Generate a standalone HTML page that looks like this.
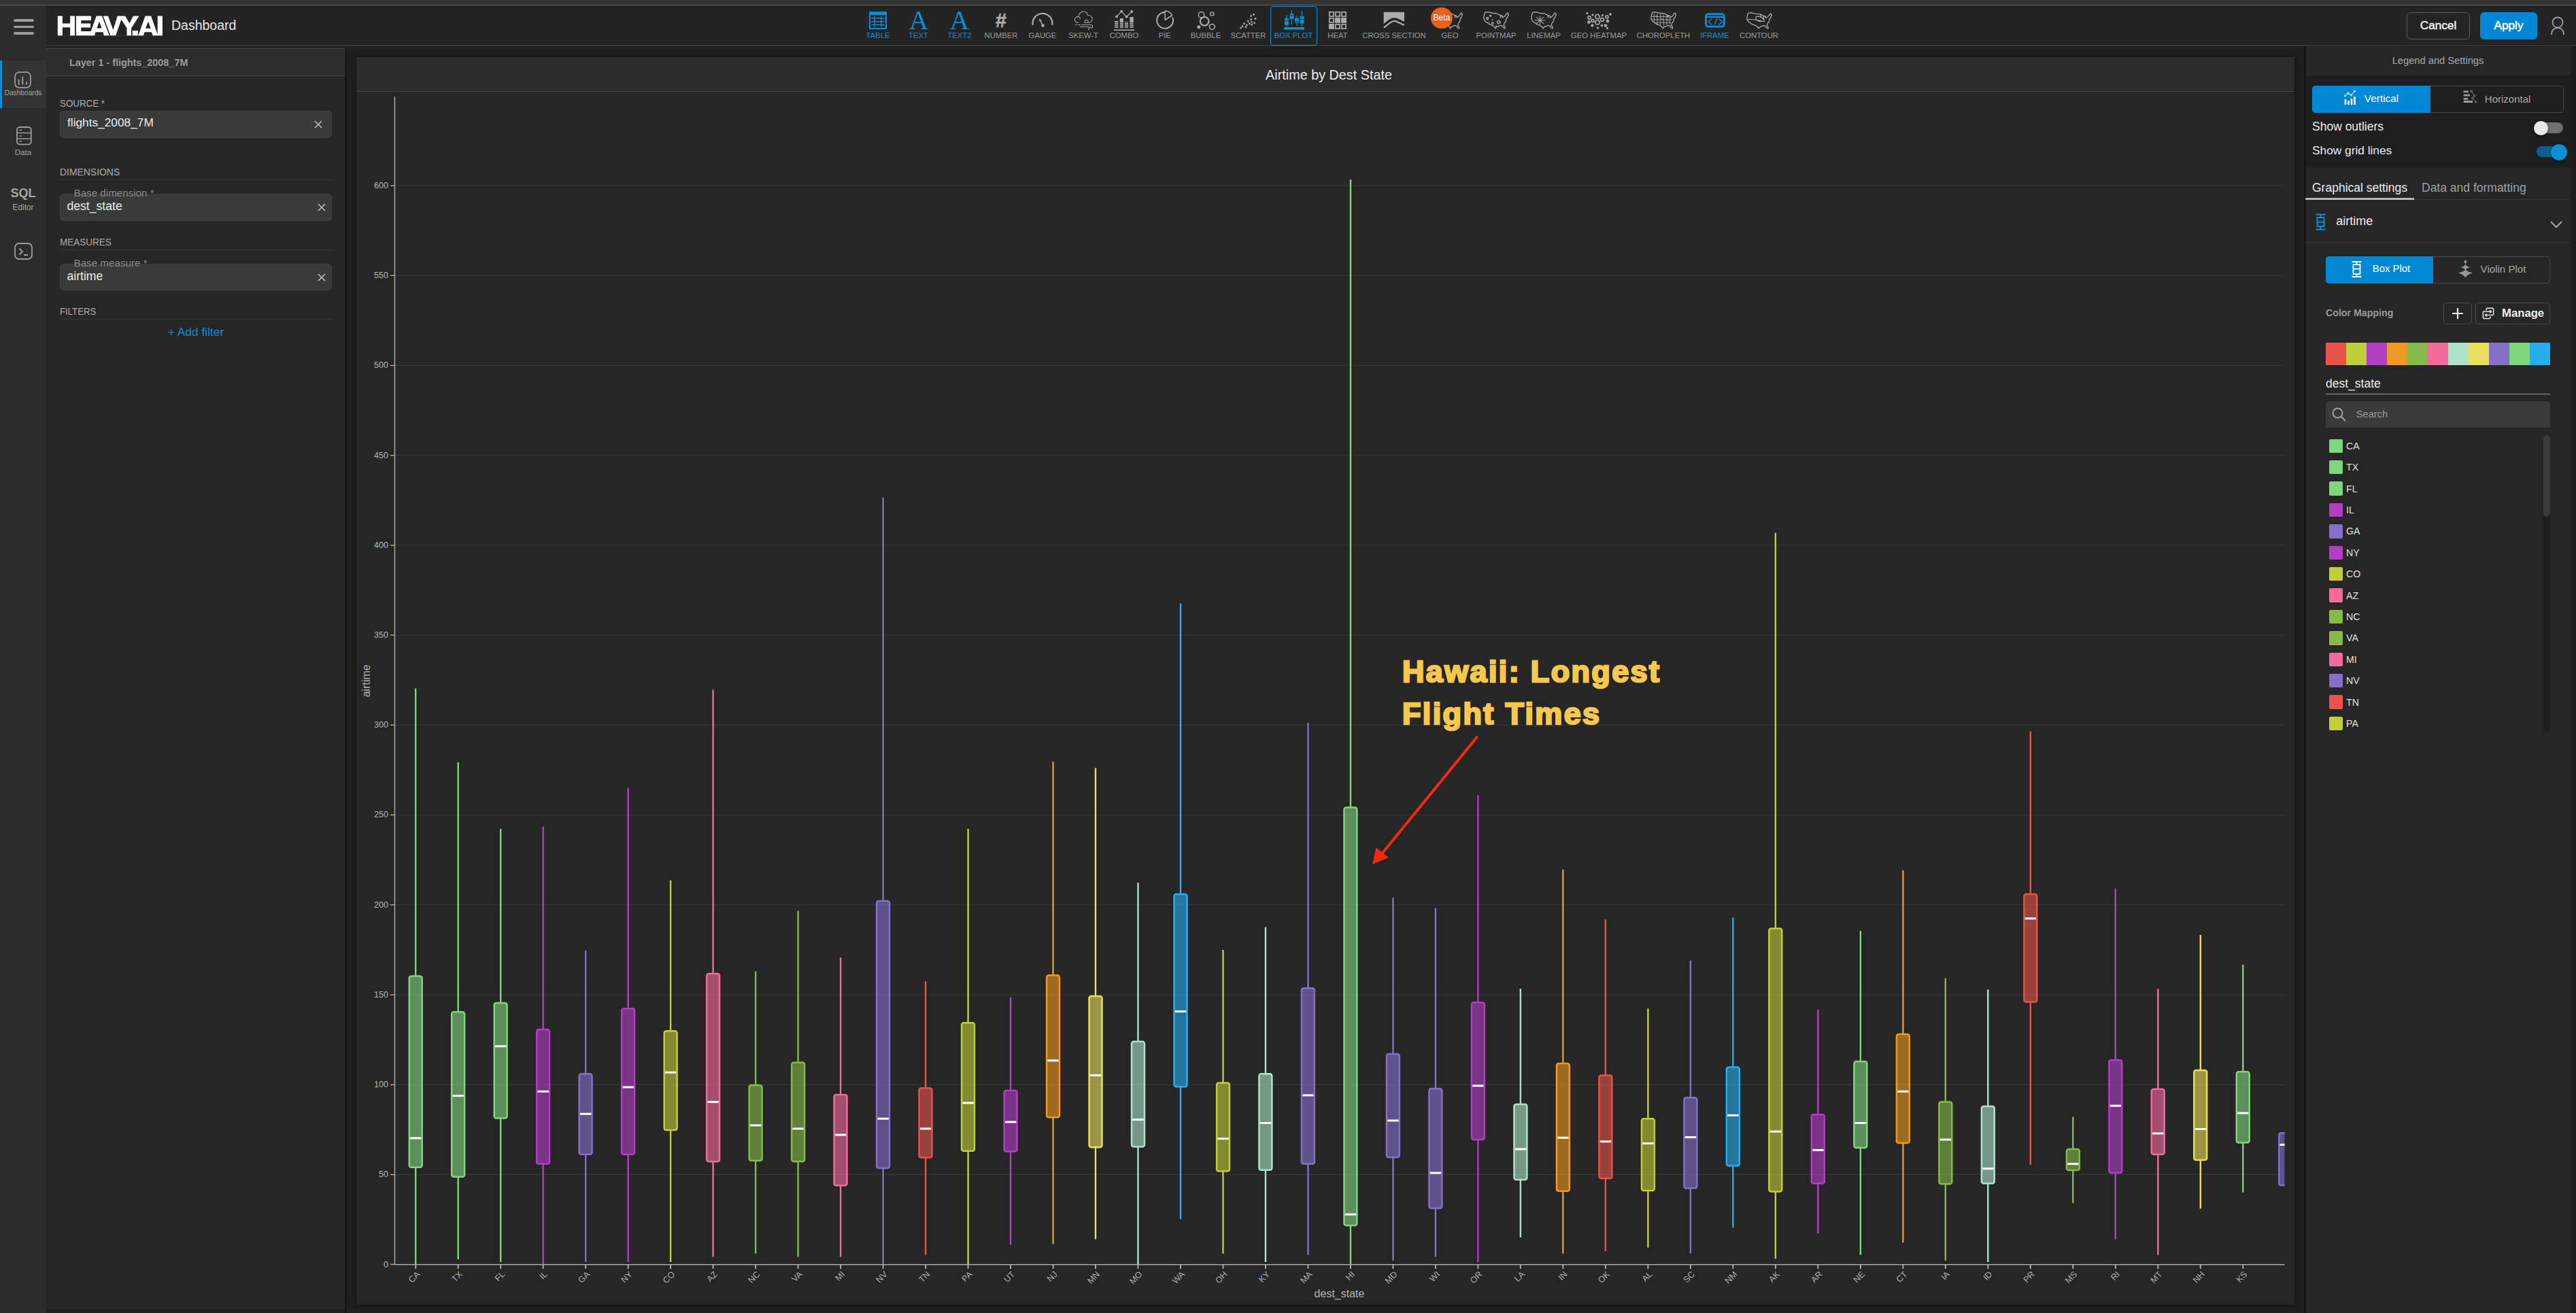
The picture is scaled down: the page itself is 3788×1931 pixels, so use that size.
<!DOCTYPE html>
<html><head><meta charset="utf-8">
<style>
*{box-sizing:border-box;margin:0;padding:0}
html,body{width:3788px;height:1931px;overflow:hidden;background:#1f1f1f;font-family:"Liberation Sans",sans-serif}
.a{position:absolute}
.t{position:absolute;white-space:nowrap;line-height:1}
</style></head><body>
<!-- top band -->
<div class="a" style="left:0;top:0;width:3788px;height:7px;background:#343434"></div>
<div class="a" style="left:0;top:7px;width:3788px;height:1px;background:#676767"></div>
<!-- header -->
<div class="a" style="left:68px;top:8px;width:3720px;height:59px;background:#242424"></div>
<div class="a" style="left:68px;top:67px;width:3720px;height:1px;background:#454545"></div>
<div class="a" style="left:68px;top:68px;width:3720px;height:1px;background:#161616"></div>
<!-- sidebar -->
<div class="a" style="left:0;top:8px;width:68px;height:1923px;background:#2c2c2c"></div>
<!-- hamburger -->
<div class="a" style="left:20px;top:28px;width:30px;height:3.5px;border-radius:2px;background:#9c9c9c"></div>
<div class="a" style="left:20px;top:37.7px;width:30px;height:3.5px;border-radius:2px;background:#9c9c9c"></div>
<div class="a" style="left:20px;top:47.3px;width:30px;height:3.5px;border-radius:2px;background:#9c9c9c"></div>
<!-- active item -->
<div class="a" style="left:0;top:89px;width:68px;height:70px;background:#333333"></div>
<div class="a" style="left:0;top:89px;width:3px;height:70px;background:#0a8fd6"></div>
<svg class="a" style="left:21px;top:104.5px" width="25" height="25" viewBox="0 0 26 26">
<rect x="1.2" y="1.2" width="23.6" height="23.6" rx="6" fill="none" stroke="#9c9c9c" stroke-width="1.8"/>
<path d="M7 19.5V13M12.8 19.5V8.5M18.8 19.5V16.5" stroke="#9c9c9c" stroke-width="2" stroke-linecap="round"/>
</svg>
<div class="t" style="left:0;width:68px;text-align:center;top:132px;font-size:10.2px;color:#a4a4a4">Dashboards</div>
<!-- data -->
<svg class="a" style="left:23.5px;top:186px" width="23" height="28" viewBox="0 0 23 28">
<rect x="1" y="1" width="20.8" height="25.3" rx="4" fill="none" stroke="#9c9c9c" stroke-width="1.8"/>
<path d="M1 9.5H21.8M1 18H21.8M4.5 5.5H8M4.5 14H8M4.5 22H8" stroke="#9c9c9c" stroke-width="1.6"/>
</svg>
<div class="t" style="left:0;width:68px;text-align:center;top:218px;font-size:11.6px;color:#a4a4a4">Data</div>
<!-- SQL -->
<div class="t" style="left:0;width:68px;text-align:center;top:275px;font-size:18px;font-weight:bold;color:#a4a4a4">SQL</div>
<div class="t" style="left:0;width:68px;text-align:center;top:300px;font-size:11.9px;color:#a4a4a4">Editor</div>
<!-- terminal -->
<svg class="a" style="left:20.5px;top:356.5px" width="27" height="25" viewBox="0 0 27 25">
<rect x="1" y="1" width="25" height="23" rx="6" fill="none" stroke="#9c9c9c" stroke-width="1.8"/>
<path d="M7.5 8.5L12 13L7.5 17.5M14 18H20" stroke="#9c9c9c" stroke-width="1.8" fill="none"/>
</svg>
<svg class="a" style="left:80px;top:20px" width="165" height="36" viewBox="80 20 165 36">
<rect x="84.8" y="23.5" width="154.1" height="28.8" fill="#fff"/>
<g fill="#242424">
<rect x="91.88" y="23" width="11.22" height="11.5"/><rect x="91.88" y="40.3" width="11.22" height="12.5"/><rect x="110.03" y="23" width="1.82" height="30"/>
<path d="M133.96 23L141.9 23L133.65 45.9L119.27 45.9L119.27 40.6L133.1 40.6L133.1 34.5L119.27 34.5L119.27 29.9L133.96 29.9Z"/>
<path d="M142.4 41.6L146 31.4L149.6 41.6Z"/><path d="M138.9 52.8L140.4 47.2L151.6 47.2L152.9 52.8Z"/>
<path d="M149.8 23L151.5 23L162.6 52.8L160.9 52.8Z"/>
<path d="M158.8 23L166.4 44L172.9 23Z"/><path d="M169.9 52.8L178.4 28.7L186.5 41.2L186.5 52.8Z"/>
<path d="M183.9 23L190.4 34.6L196.1 23Z"/>
<path d="M204.9 23L193.1 41.4L193.1 52.8L194.8 52.8L194.8 44.9L202.9 44.9L202.9 52.8L203.1 52.8L213.8 23Z"/>
<path d="M214.2 41.8L217.8 31.4L221.7 41.8Z"/><path d="M210.8 52.8L212.5 47.3L222.8 47.3L224.9 52.8Z"/>
<path d="M221.9 23L231.7 23L231.7 50.6Z"/>
</g></svg>
<div class="t" style="left:252px;top:28.49px;font-size:19.5px;color:#e4e4e4;">Dashboard</div>
<div class="t" style="left:791px;width:1000px;text-align:center;top:47.43px;font-size:11.3px;color:#0a8fd6;">TABLE</div>
<div class="t" style="left:850.5px;width:1000px;text-align:center;top:47.43px;font-size:11.3px;color:#0a8fd6;">TEXT</div>
<div class="t" style="left:911px;width:1000px;text-align:center;top:47.43px;font-size:11.3px;color:#0a8fd6;">TEXT2</div>
<div class="t" style="left:972px;width:1000px;text-align:center;top:47.43px;font-size:11.3px;color:#9a9a9a;">NUMBER</div>
<div class="t" style="left:1033px;width:1000px;text-align:center;top:47.43px;font-size:11.3px;color:#9a9a9a;">GAUGE</div>
<div class="t" style="left:1093px;width:1000px;text-align:center;top:47.43px;font-size:11.3px;color:#9a9a9a;">SKEW-T</div>
<div class="t" style="left:1153px;width:1000px;text-align:center;top:47.43px;font-size:11.3px;color:#9a9a9a;">COMBO</div>
<div class="t" style="left:1212.8px;width:1000px;text-align:center;top:47.43px;font-size:11.3px;color:#9a9a9a;">PIE</div>
<div class="t" style="left:1273px;width:1000px;text-align:center;top:47.43px;font-size:11.3px;color:#9a9a9a;">BUBBLE</div>
<div class="t" style="left:1335.6px;width:1000px;text-align:center;top:47.43px;font-size:11.3px;color:#9a9a9a;">SCATTER</div>
<div class="t" style="left:1402px;width:1000px;text-align:center;top:47.43px;font-size:11.3px;color:#0a8fd6;">BOX PLOT</div>
<div class="t" style="left:1467px;width:1000px;text-align:center;top:47.43px;font-size:11.3px;color:#9a9a9a;">HEAT</div>
<div class="t" style="left:1550px;width:1000px;text-align:center;top:47.43px;font-size:11.3px;color:#9a9a9a;">CROSS SECTION</div>
<div class="t" style="left:1632px;width:1000px;text-align:center;top:47.43px;font-size:11.3px;color:#9a9a9a;">GEO</div>
<div class="t" style="left:1700px;width:1000px;text-align:center;top:47.43px;font-size:11.3px;color:#9a9a9a;">POINTMAP</div>
<div class="t" style="left:1770px;width:1000px;text-align:center;top:47.43px;font-size:11.3px;color:#9a9a9a;">LINEMAP</div>
<div class="t" style="left:1851px;width:1000px;text-align:center;top:47.43px;font-size:11.3px;color:#9a9a9a;">GEO HEATMAP</div>
<div class="t" style="left:1946px;width:1000px;text-align:center;top:47.43px;font-size:11.3px;color:#9a9a9a;">CHOROPLETH</div>
<div class="t" style="left:2021.5px;width:1000px;text-align:center;top:47.43px;font-size:11.3px;color:#0a8fd6;">IFRAME</div>
<div class="t" style="left:2086.5px;width:1000px;text-align:center;top:47.43px;font-size:11.3px;color:#9a9a9a;">CONTOUR</div>
<div class="a" style="left:1868px;top:9px;width:69px;height:58px;border:1.5px solid #0a8fd6;border-radius:4px"></div>
<svg class="a" style="left:1278px;top:17px" width="26" height="26" viewBox="0 0 26 26">
<rect x="1" y="1" width="24" height="24" fill="none" stroke="#0a8fd6" stroke-width="2"/><rect x="1" y="1" width="24" height="4" fill="#0a8fd6"/>
<path d="M3 9.8H23M3 14.7H23M3 19.6H23M8 7V23M17.9 7V23" stroke="#0a8fd6" stroke-width="1.5"/></svg>
<div class="t" style="left:1331px;width:40px;text-align:center;top:10.5px;font-family:'Liberation Serif';font-size:39.5px;color:#0a8fd6">A</div>
<div class="t" style="left:1391px;width:40px;text-align:center;top:10.5px;font-family:'Liberation Serif';font-size:39.5px;color:#0a8fd6">A</div>
<div class="t" style="left:1452px;width:40px;text-align:center;top:15.5px;font-size:29px;font-weight:bold;color:#ababab;-webkit-text-stroke:0.5px #ababab">#</div>
<svg class="a" style="left:1516px;top:18px" width="34" height="24" viewBox="0 0 34 24">
<path d="M2.85 18.9A14.4 14.4 0 1 1 31.15 18.9" fill="none" stroke="#ababab" stroke-width="2.2"/>
<path d="M17.5 19.6L13.6 12.2" stroke="#ababab" stroke-width="1.4"/><path d="M12.2 8.9L16 12.4L12.4 13.6Z" fill="#ababab"/><circle cx="17.5" cy="19.6" r="2.3" fill="#ababab"/></svg>
<svg class="a" style="left:1579px;top:16px" width="29" height="29" viewBox="0 0 29 29">
<path d="M7 17.5C2.5 17.5 1 14.5 1.5 12C2 9.5 4.5 8 7 8.5C7.5 4 10.5 1 14 1C17.5 1 20 3.5 20.5 6.5C24 6 27.5 8.5 27 12.5C26.5 16 24 17.5 21.5 17.5" fill="none" stroke="#ababab" stroke-width="1.1"/>
<path d="M7.5 9C8.5 9.5 9.5 10.5 9.8 11.5M15 17.5H20C21.5 17.5 22 14 19.5 13.5C17 13 16 15 16.5 16" fill="none" stroke="#ababab" stroke-width="1.1"/>
<path d="M2 20.5H4M5.5 20.5H10M11.5 20.5H25.5C28 20.5 28.5 24.5 26 25C24.5 25.3 23.5 24 24 23M9 23.5H21C23 23.5 23 27.5 21 28" fill="none" stroke="#ababab" stroke-width="1.1"/></svg>
<svg class="a" style="left:1637px;top:14px" width="32" height="32" viewBox="0 0 32 32">
<path d="M5 10.3L12.2 2.6L19.6 10.7L27.2 3" fill="none" stroke="#ababab" stroke-width="1.3"/>
<circle cx="5" cy="10.3" r="1.9" fill="#ababab"/><circle cx="12.2" cy="2.6" r="1.9" fill="#ababab"/><circle cx="19.6" cy="10.7" r="1.9" fill="#ababab"/><circle cx="27.2" cy="3" r="1.9" fill="#ababab"/>
<path d="M2.1 17H7.3V26.7H2.1ZM9.8 13.1H15V26.7H9.8ZM17.1 18.2H22V26.7H17.1ZM24.4 11H29.7V26.7H24.4Z" fill="#ababab"/>
<path d="M2 19.5H30M2 22H30M2 24.5H30" stroke="#242424" stroke-width="0.8"/>
<path d="M1 30.2H31" stroke="#ababab" stroke-width="1.6"/></svg>
<svg class="a" style="left:1699px;top:14px" width="30" height="30" viewBox="0 0 30 30">
<path d="M25.2 11.5A11.9 11.9 0 1 1 14.2 4" fill="none" stroke="#ababab" stroke-width="2"/>
<path d="M14.2 2V15.5L24.7 8.5A12 12 0 0 0 14.2 2Z" fill="none" stroke="#ababab" stroke-width="1.6" stroke-linejoin="round"/></svg>
<svg class="a" style="left:1758px;top:14px" width="30" height="30" viewBox="0 0 30 30">
<circle cx="13.2" cy="17.3" r="6.3" fill="none" stroke="#ababab" stroke-width="2.2"/><circle cx="8.6" cy="7.9" r="4.3" fill="none" stroke="#ababab" stroke-width="1.5"/>
<circle cx="24.3" cy="6.5" r="2.6" fill="none" stroke="#ababab" stroke-width="1.4"/><circle cx="24.3" cy="25.4" r="3.9" fill="none" stroke="#ababab" stroke-width="1.6"/><circle cx="4.8" cy="25.7" r="2.5" fill="#ababab"/></svg>
<svg class="a" style="left:1820px;top:16px" width="30" height="30" viewBox="1820 16 30 30"><circle cx="1824.7" cy="41.1" r="1.45" fill="#ababab"/><circle cx="1827.1" cy="38.7" r="1.45" fill="#ababab"/><circle cx="1829.6" cy="34.8" r="1.45" fill="#ababab"/><circle cx="1832" cy="40" r="1.45" fill="#ababab"/><circle cx="1833.4" cy="36.9" r="1.45" fill="#ababab"/><circle cx="1835.2" cy="31" r="1.45" fill="#ababab"/><circle cx="1837.3" cy="34.8" r="1.45" fill="#ababab"/><circle cx="1839.7" cy="28.5" r="1.45" fill="#ababab"/><circle cx="1840.7" cy="32.4" r="1.45" fill="#ababab"/><circle cx="1840.7" cy="36.2" r="1.45" fill="#ababab"/><circle cx="1839.7" cy="23.6" r="1.45" fill="#ababab"/><circle cx="1843.5" cy="21.2" r="1.45" fill="#ababab"/><circle cx="1846" cy="27.5" r="1.45" fill="#ababab"/><circle cx="1844.6" cy="33.8" r="1.45" fill="#ababab"/></svg>
<svg class="a" style="left:1886px;top:13px" width="34" height="32" viewBox="1886 13 34 32">
<path d="M1892.1 21.9V38.7M1899.4 15.2V35.9M1907 23.3V38M1914.5 16.3V38.7" stroke="#0a8fd6" stroke-width="1.2"/>
<rect x="1889" y="26.8" width="5.9" height="10.1" fill="#0a8fd6"/><rect x="1896.7" y="20.1" width="5.9" height="7.7" fill="#0a8fd6"/>
<rect x="1904" y="26.8" width="5.9" height="7" fill="#0a8fd6"/><rect x="1911.7" y="24" width="5.9" height="10.5" fill="#0a8fd6"/>
<path d="M1889 30.6H1894.9M1896.7 22.9H1902.6M1904 32H1909.9M1911.7 28.5H1917.6" stroke="#242424" stroke-width="0.9"/>
<rect x="1888" y="40" width="30" height="3.5" fill="#0a8fd6"/></svg>
<svg class="a" style="left:1950px;top:14px" width="34" height="32" viewBox="1950 14 34 32"><rect x="1954.85" y="17.75" width="6.2" height="6.2" fill="none" stroke="#ababab" stroke-width="1.7"/><rect x="1963.90" y="17.75" width="6.2" height="6.2" fill="none" stroke="#ababab" stroke-width="1.7"/><rect x="1972.95" y="17.75" width="6.2" height="6.2" fill="none" stroke="#ababab" stroke-width="1.7"/><rect x="1954.85" y="26.80" width="6.2" height="6.2" fill="none" stroke="#ababab" stroke-width="1.7"/><rect x="1963.05" y="25.95" width="7.9" height="7.9" fill="#ababab"/><rect x="1972.10" y="25.95" width="7.9" height="7.9" fill="#ababab"/><rect x="1954.00" y="35.00" width="7.9" height="7.9" fill="#ababab"/><rect x="1963.90" y="35.85" width="6.2" height="6.2" fill="none" stroke="#ababab" stroke-width="1.7"/><rect x="1972.95" y="35.85" width="6.2" height="6.2" fill="none" stroke="#ababab" stroke-width="1.7"/></svg>
<svg class="a" style="left:2032px;top:16px" width="36" height="28" viewBox="2032 16 36 28">
<path d="M2034.7 17.8H2065V31.8C2060 30 2056 26 2050 26.2C2044 26.4 2039 32 2034.7 35Z" fill="#ababab"/>
<path d="M2035 40.6C2040 37.4 2045 30.9 2050 30.8C2055 30.7 2060 35.9 2065 36.8" fill="none" stroke="#ababab" stroke-width="2.3"/></svg>
<svg class="a" style="left:2116px;top:17px" width="35" height="26" viewBox="0 0 100 70" preserveAspectRatio="none"><defs><clipPath id="c2116"><path d="M8 3L19 2L34 6L54 8L62 13L67 15L67 24L69 15L74 17L75 24L84 18L91 8L94 5L99 13L95 18L94 24L89 28L89 36L83 45L80 51L81 57L85 62L84 67L78 64L75 57L67 55L59 58L51 61L48 67L41 58L32 53L25 51L18 46L8 39L2 27L4.4 11.5Z"/></clipPath></defs><path d="M8 3L19 2L34 6L54 8L62 13L67 15L67 24L69 15L74 17L75 24L84 18L91 8L94 5L99 13L95 18L94 24L89 28L89 36L83 45L80 51L81 57L85 62L84 67L78 64L75 57L67 55L59 58L51 61L48 67L41 58L32 53L25 51L18 46L8 39L2 27L4.4 11.5Z" fill="none" stroke="#ababab" stroke-width="1.3" vector-effect="non-scaling-stroke" stroke-linejoin="round"/><g clip-path="url(#c2116)"></g></svg>
<div class="a" style="left:2104.2px;top:10.6px;width:31.6px;height:31.6px;border-radius:50%;background:#e8621e"></div>
<div class="t" style="left:2080px;width:80px;text-align:center;top:19.7px;font-size:12.2px;color:#fff">Beta</div>
<svg class="a" style="left:2181px;top:17px" width="38" height="26" viewBox="0 0 100 70" preserveAspectRatio="none"><defs><clipPath id="c2181"><path d="M8 3L19 2L34 6L54 8L62 13L67 15L67 24L69 15L74 17L75 24L84 18L91 8L94 5L99 13L95 18L94 24L89 28L89 36L83 45L80 51L81 57L85 62L84 67L78 64L75 57L67 55L59 58L51 61L48 67L41 58L32 53L25 51L18 46L8 39L2 27L4.4 11.5Z"/></clipPath></defs><path d="M8 3L19 2L34 6L54 8L62 13L67 15L67 24L69 15L74 17L75 24L84 18L91 8L94 5L99 13L95 18L94 24L89 28L89 36L83 45L80 51L81 57L85 62L84 67L78 64L75 57L67 55L59 58L51 61L48 67L41 58L32 53L25 51L18 46L8 39L2 27L4.4 11.5Z" fill="none" stroke="#ababab" stroke-width="1.3" vector-effect="non-scaling-stroke" stroke-linejoin="round"/><g clip-path="url(#c2181)"><circle cx="16" cy="27" r="4" fill="none" stroke="#ababab" stroke-width="1.5" vector-effect="non-scaling-stroke"/><circle cx="28" cy="17" r="3" fill="none" stroke="#ababab" stroke-width="1.3" vector-effect="non-scaling-stroke"/><circle cx="36" cy="33" r="2.5" fill="#ababab"/><circle cx="23" cy="43" r="2.2" fill="#ababab"/><circle cx="36" cy="46" r="3.4" fill="none" stroke="#ababab" stroke-width="1.3" vector-effect="non-scaling-stroke"/><circle cx="60" cy="42" r="5.5" fill="none" stroke="#ababab" stroke-width="1.5" vector-effect="non-scaling-stroke"/><circle cx="50" cy="58" r="2.5" fill="#ababab"/></g></svg>
<svg class="a" style="left:2251px;top:17px" width="38" height="26" viewBox="0 0 100 70" preserveAspectRatio="none"><defs><clipPath id="c2251"><path d="M8 3L19 2L34 6L54 8L62 13L67 15L67 24L69 15L74 17L75 24L84 18L91 8L94 5L99 13L95 18L94 24L89 28L89 36L83 45L80 51L81 57L85 62L84 67L78 64L75 57L67 55L59 58L51 61L48 67L41 58L32 53L25 51L18 46L8 39L2 27L4.4 11.5Z"/></clipPath></defs><path d="M8 3L19 2L34 6L54 8L62 13L67 15L67 24L69 15L74 17L75 24L84 18L91 8L94 5L99 13L95 18L94 24L89 28L89 36L83 45L80 51L81 57L85 62L84 67L78 64L75 57L67 55L59 58L51 61L48 67L41 58L32 53L25 51L18 46L8 39L2 27L4.4 11.5Z" fill="none" stroke="#ababab" stroke-width="1.3" vector-effect="non-scaling-stroke" stroke-linejoin="round"/><g clip-path="url(#c2251)"><path d="M36 18V52M16 35H56M22 22L50 48M50 22L22 48" stroke="#ababab" stroke-width="1.1" vector-effect="non-scaling-stroke"/></g></svg>
<svg class="a" style="left:2328px;top:14px" width="46" height="32" viewBox="2328 14 46 32"><path d="M2339.40 26.00L2338.20 28.08L2335.80 28.08L2334.60 26.00L2335.80 23.92L2338.20 23.92Z" fill="none" stroke="#ababab" stroke-width="1.6"/><path d="M2344.20 30.50L2343.10 32.41L2340.90 32.41L2339.80 30.50L2340.90 28.59L2343.10 28.59Z" fill="none" stroke="#ababab" stroke-width="1.6"/><path d="M2352.40 24.50L2350.70 27.44L2347.30 27.44L2345.60 24.50L2347.30 21.56L2350.70 21.56Z" fill="none" stroke="#ababab" stroke-width="1.6"/><path d="M2352.40 33.00L2350.70 35.94L2347.30 35.94L2345.60 33.00L2347.30 30.06L2350.70 30.06Z" fill="none" stroke="#ababab" stroke-width="1.6"/><path d="M2358.80 29.00L2357.40 31.42L2354.60 31.42L2353.20 29.00L2354.60 26.58L2357.40 26.58Z" fill="none" stroke="#ababab" stroke-width="1.6"/><path d="M2365.20 25.00L2364.10 26.91L2361.90 26.91L2360.80 25.00L2361.90 23.09L2364.10 23.09Z" fill="none" stroke="#ababab" stroke-width="1.6"/><path d="M2366.50 31.00L2365.25 33.17L2362.75 33.17L2361.50 31.00L2362.75 28.83L2365.25 28.83Z" fill="#ababab"/><path d="M2339.00 32.50L2337.75 34.67L2335.25 34.67L2334.00 32.50L2335.25 30.33L2337.75 30.33Z" fill="#ababab"/><path d="M2343.80 37.50L2342.65 39.49L2340.35 39.49L2339.20 37.50L2340.35 35.51L2342.65 35.51Z" fill="#ababab"/><path d="M2357.50 37.50L2356.50 39.23L2354.50 39.23L2353.50 37.50L2354.50 35.77L2356.50 35.77Z" fill="#ababab"/><path d="M2363.50 37.50L2362.25 39.67L2359.75 39.67L2358.50 37.50L2359.75 35.33L2362.25 35.33Z" fill="#ababab"/><path d="M2370.00 21.00L2369.00 22.73L2367.00 22.73L2366.00 21.00L2367.00 19.27L2369.00 19.27Z" fill="#ababab"/><path d="M2335.60 19.50L2334.80 20.89L2333.20 20.89L2332.40 19.50L2333.20 18.11L2334.80 18.11Z" fill="#ababab"/><path d="M2358.10 22.50L2357.30 23.89L2355.70 23.89L2354.90 22.50L2355.70 21.11L2357.30 21.11Z" fill="#ababab"/><path d="M2351.30 41.00L2350.40 42.56L2348.60 42.56L2347.70 41.00L2348.60 39.44L2350.40 39.44Z" fill="#ababab"/><path d="M2365.10 41.50L2364.30 42.89L2362.70 42.89L2361.90 41.50L2362.70 40.11L2364.30 40.11Z" fill="#ababab"/><path d="M2342.70 22.00L2342.35 22.61L2341.65 22.61L2341.30 22.00L2341.65 21.39L2342.35 21.39Z" fill="none" stroke="#ababab" stroke-width="1.6"/></svg>
<svg class="a" style="left:2426.5px;top:17px" width="38.5" height="26" viewBox="0 0 100 70" preserveAspectRatio="none"><defs><clipPath id="c2426.5"><path d="M8 3L19 2L34 6L54 8L62 13L67 15L67 24L69 15L74 17L75 24L84 18L91 8L94 5L99 13L95 18L94 24L89 28L89 36L83 45L80 51L81 57L85 62L84 67L78 64L75 57L67 55L59 58L51 61L48 67L41 58L32 53L25 51L18 46L8 39L2 27L4.4 11.5Z"/></clipPath></defs><path d="M8 3L19 2L34 6L54 8L62 13L67 15L67 24L69 15L74 17L75 24L84 18L91 8L94 5L99 13L95 18L94 24L89 28L89 36L83 45L80 51L81 57L85 62L84 67L78 64L75 57L67 55L59 58L51 61L48 67L41 58L32 53L25 51L18 46L8 39L2 27L4.4 11.5Z" fill="none" stroke="#ababab" stroke-width="1.3" vector-effect="non-scaling-stroke" stroke-linejoin="round"/><g clip-path="url(#c2426.5)"><path d="M14 8V44M26 8V52M38 10V54M50 12V56M62 14V52M74 18V50M4 20H70M6 32H82M12 44H78M20 14L26 24M40 26L48 34M60 30L70 38" stroke="#ababab" stroke-width="0.9" vector-effect="non-scaling-stroke" fill="none"/></g></svg>
<svg class="a" style="left:2505px;top:17px" width="34" height="26" viewBox="2505 17 34 26">
<rect x="2508.5" y="20.7" width="26.8" height="18.4" rx="3.5" fill="none" stroke="#0a8fd6" stroke-width="2.8"/>
<path d="M2508.5 24.9H2535.3" stroke="#0a8fd6" stroke-width="2.2"/>
<path d="M2517.3 27.3L2512.2 31.9L2517.3 36.6M2525.3 26.6L2520.7 36.6M2527.2 27.3L2532.4 31.9L2527.2 36.6" fill="none" stroke="#0a8fd6" stroke-width="1.3"/></svg>
<svg class="a" style="left:2568px;top:18px" width="38" height="25" viewBox="0 0 100 70" preserveAspectRatio="none"><defs><clipPath id="c2568"><path d="M8 3L19 2L34 6L54 8L62 13L67 15L67 24L69 15L74 17L75 24L84 18L91 8L94 5L99 13L95 18L94 24L89 28L89 36L83 45L80 51L81 57L85 62L84 67L78 64L75 57L67 55L59 58L51 61L48 67L41 58L32 53L25 51L18 46L8 39L2 27L4.4 11.5Z"/></clipPath></defs><path d="M8 3L19 2L34 6L54 8L62 13L67 15L67 24L69 15L74 17L75 24L84 18L91 8L94 5L99 13L95 18L94 24L89 28L89 36L83 45L80 51L81 57L85 62L84 67L78 64L75 57L67 55L59 58L51 61L48 67L41 58L32 53L25 51L18 46L8 39L2 27L4.4 11.5Z" fill="none" stroke="#ababab" stroke-width="1.3" vector-effect="non-scaling-stroke" stroke-linejoin="round"/><g clip-path="url(#c2568)"><path d="M4 30C20 24 50 36 68 38C74 34 60 14 40 18C30 22 40 38 58 38M56 6C50 16 60 24 68 30" stroke="#ababab" stroke-width="1.2" vector-effect="non-scaling-stroke" fill="none"/></g></svg>
<div class="a" style="left:3539px;top:18px;width:93px;height:40px;border:1px solid #5a5a5a;border-radius:6px"></div>
<div class="t" style="left:3085.5px;width:1000px;text-align:center;top:28.74px;font-size:17.2px;color:#f2f2f2;-webkit-text-stroke:0.45px #f2f2f2;">Cancel</div>
<div class="a" style="left:3647px;top:18px;width:84px;height:40px;background:#0088d4;border-radius:6px"></div>
<div class="t" style="left:3189px;width:1000px;text-align:center;top:28.74px;font-size:17.2px;color:#ffffff;-webkit-text-stroke:0.55px #fff;">Apply</div>
<svg class="a" style="left:3749px;top:24px" width="24" height="28" viewBox="0 0 24 28">
<circle cx="12" cy="9" r="7.5" fill="none" stroke="#9c9c9c" stroke-width="1.8"/>
<path d="M3 27C3 20 7 17 12 17S21 20 21 27" fill="none" stroke="#9c9c9c" stroke-width="1.8"/>
</svg>
<div class="a" style="left:68px;top:69px;width:440px;height:1856px;background:#262626;"></div>
<div class="a" style="left:68px;top:1925px;width:440px;height:6px;background:#1f1f1f;"></div>
<div class="a" style="left:508px;top:69px;width:1px;height:1862px;background:#000000;"></div>
<div class="a" style="left:68px;top:71px;width:440px;height:1px;background:#454545;"></div>
<div class="a" style="left:68px;top:72px;width:440px;height:39px;background:#2d2d2d;"></div>
<div class="a" style="left:68px;top:111px;width:440px;height:1px;background:#454545;"></div>
<div class="t" style="left:102px;top:84.81px;font-size:14.4px;color:#9c9c9c;font-weight:bold;">Layer 1 - flights_2008_7M</div>
<div class="t" style="left:88px;top:144.33px;font-size:15.2px;color:#adadad;transform:scaleX(0.879);transform-origin:0 0;">SOURCE *</div>
<div class="a" style="left:88px;top:163px;width:400px;height:40px;background:#3a3a3a;border-radius:5px;border:1px solid #404040"></div>
<div class="t" style="left:99px;top:172.36px;font-size:17.3px;color:#ececec;">flights_2008_7M</div>
<svg class="a" style="left:460.5px;top:176px" width="14" height="14" viewBox="0 0 14 14"><path d="M2 2L12 12M12 2L2 12" stroke="#bdbdbd" stroke-width="1.6"/></svg>
<div class="t" style="left:88px;top:245.13px;font-size:15.2px;color:#adadad;transform:scaleX(0.917);transform-origin:0 0;">DIMENSIONS</div>
<div class="a" style="left:88px;top:264px;width:400px;height:1px;background:#363636;"></div>
<div class="a" style="left:88px;top:285px;width:400px;height:40px;background:#3a3a3a;border-radius:5px;border:1px solid #404040"></div>
<div class="a" style="left:103px;top:285px;width:129px;height:2px;background:#3a3a3a;"></div>
<div class="t" style="left:108.5px;top:276.33px;font-size:15.2px;color:#8c8c8c;">Base dimension *</div>
<div class="t" style="left:98.5px;top:295.10px;font-size:17.6px;color:#ececec;">dest_state</div>
<svg class="a" style="left:465.5px;top:298px" width="14" height="14" viewBox="0 0 14 14"><path d="M2 2L12 12M12 2L2 12" stroke="#bdbdbd" stroke-width="1.6"/></svg>
<div class="t" style="left:88px;top:347.63px;font-size:15.2px;color:#adadad;transform:scaleX(0.888);transform-origin:0 0;">MEASURES</div>
<div class="a" style="left:88px;top:367px;width:400px;height:1px;background:#363636;"></div>
<div class="a" style="left:88px;top:388px;width:400px;height:39px;background:#3a3a3a;border-radius:5px;border:1px solid #404040"></div>
<div class="a" style="left:103px;top:388px;width:118px;height:2px;background:#3a3a3a;"></div>
<div class="t" style="left:108.5px;top:379.33px;font-size:15.2px;color:#8c8c8c;">Base measure *</div>
<div class="t" style="left:98.5px;top:398.10px;font-size:17.6px;color:#ececec;">airtime</div>
<svg class="a" style="left:465.5px;top:401px" width="14" height="14" viewBox="0 0 14 14"><path d="M2 2L12 12M12 2L2 12" stroke="#bdbdbd" stroke-width="1.6"/></svg>
<div class="t" style="left:88px;top:450.13px;font-size:15.2px;color:#adadad;transform:scaleX(0.869);transform-origin:0 0;">FILTERS</div>
<div class="a" style="left:88px;top:469px;width:400px;height:1px;background:#363636;"></div>
<div class="t" style="left:-212px;width:1000px;text-align:center;top:480.27px;font-size:17.4px;color:#0a8fd6;">+ Add filter</div>
<div class="a" style="left:524px;top:84px;width:2850px;height:1835px;background:#262626;box-shadow:0 0 6px rgba(0,0,0,0.6)"></div>
<div class="a" style="left:524px;top:84px;width:2850px;height:50px;background:#2c2c2c;"></div>
<div class="a" style="left:524px;top:134px;width:2850px;height:1px;background:#444444;"></div>
<div class="t" style="left:1454px;width:1000px;text-align:center;top:100.64px;font-size:19.8px;color:#f0f0f0;">Airtime by Dest State</div>
<svg style="position:absolute;left:0;top:0" width="3788" height="1931" viewBox="0 0 3788 1931">
<defs><clipPath id="cp"><rect x="581" y="130" width="2778.5" height="1740"/></clipPath></defs>
<path d="M581 1727.4H3360 M581 1595.2H3360 M581 1463.0H3360 M581 1330.7H3360 M581 1198.5H3360 M581 1066.3H3360 M581 934.1H3360 M581 801.9H3360 M581 669.7H3360 M581 537.5H3360 M581 405.2H3360 M581 273.0H3360" stroke="#363636" stroke-width="1.2" fill="none"/>
<path d="M574 1859.6H581 M574 1727.4H581 M574 1595.2H581 M574 1463.0H581 M574 1330.7H581 M574 1198.5H581 M574 1066.3H581 M574 934.1H581 M574 801.9H581 M574 669.7H581 M574 537.5H581 M574 405.2H581 M574 273.0H581" stroke="#a8a8a8" stroke-width="1.5" fill="none"/>
<g font-family="Liberation Sans" font-size="12.6" fill="#b8b8b8" text-anchor="end"><text x="571" y="1863.5">0</text><text x="571" y="1731.3">50</text><text x="571" y="1599.1">100</text><text x="571" y="1466.9">150</text><text x="571" y="1334.6">200</text><text x="571" y="1202.4">250</text><text x="571" y="1070.2">300</text><text x="571" y="938.0">350</text><text x="571" y="805.8">400</text><text x="571" y="673.6">450</text><text x="571" y="541.4">500</text><text x="571" y="409.1">550</text><text x="571" y="276.9">600</text></g>
<path d="M580.5 142V1860.2M580 1859.7H3359.5" stroke="#a8a8a8" stroke-width="1.5" fill="none"/>
<g clip-path="url(#cp)" fill="none"><g stroke="#80d67e"><path d="M611.2 1012.4V1435.9M611.2 1716.3V1859.5" stroke-width="2.4"/><rect x="601.8" y="1435.6" width="18.9" height="281.1" rx="3" fill="#80d67e" fill-opacity="0.6" stroke-width="2.5"/><path d="M603.0 1673.9H619.4" stroke="#fff" stroke-width="3"/></g><g stroke="#80d67e"><path d="M673.7 1121.0V1488.5M673.7 1730.4V1851.9" stroke-width="2.4"/><rect x="664.2" y="1488.2" width="18.9" height="242.6" rx="3" fill="#80d67e" fill-opacity="0.6" stroke-width="2.5"/><path d="M665.5 1611.5H681.9" stroke="#fff" stroke-width="3"/></g><g stroke="#80d67e"><path d="M736.2 1219.1V1475.2M736.2 1644.2V1856.0" stroke-width="2.4"/><rect x="726.7" y="1474.9" width="18.9" height="169.7" rx="3" fill="#80d67e" fill-opacity="0.6" stroke-width="2.5"/><path d="M728.0 1538.7H744.4" stroke="#fff" stroke-width="3"/></g><g stroke="#b23ec5"><path d="M798.7 1215.6V1514.4M798.7 1711.4V1859.5" stroke-width="2.4"/><rect x="789.2" y="1514.1" width="18.9" height="197.7" rx="3" fill="#b23ec5" fill-opacity="0.6" stroke-width="2.5"/><path d="M790.5 1605.2H806.9" stroke="#fff" stroke-width="3"/></g><g stroke="#8470c9"><path d="M861.2 1397.8V1579.6M861.2 1697.4V1856.0" stroke-width="2.4"/><rect x="851.7" y="1579.2" width="18.9" height="118.5" rx="3" fill="#8470c9" fill-opacity="0.6" stroke-width="2.5"/><path d="M853.0 1638.2H869.4" stroke="#fff" stroke-width="3"/></g><g stroke="#b23ec5"><path d="M923.7 1158.8V1483.6M923.7 1697.4V1856.0" stroke-width="2.4"/><rect x="914.2" y="1483.2" width="18.9" height="214.5" rx="3" fill="#b23ec5" fill-opacity="0.6" stroke-width="2.5"/><path d="M915.5 1598.9H931.9" stroke="#fff" stroke-width="3"/></g><g stroke="#c0cf38"><path d="M986.1 1294.8V1516.5M986.1 1661.7V1856.0" stroke-width="2.4"/><rect x="976.7" y="1516.2" width="18.9" height="145.9" rx="3" fill="#c0cf38" fill-opacity="0.6" stroke-width="2.5"/><path d="M977.9 1577.2H994.3" stroke="#fff" stroke-width="3"/></g><g stroke="#f36b9b"><path d="M1048.6 1014.5V1432.4M1048.6 1707.9V1848.4" stroke-width="2.4"/><rect x="1039.2" y="1432.1" width="18.9" height="276.2" rx="3" fill="#f36b9b" fill-opacity="0.6" stroke-width="2.5"/><path d="M1040.4 1620.6H1056.8" stroke="#fff" stroke-width="3"/></g><g stroke="#85ba48"><path d="M1111.1 1428.6V1596.4M1111.1 1706.5V1843.5" stroke-width="2.4"/><rect x="1101.7" y="1596.1" width="18.9" height="110.8" rx="3" fill="#85ba48" fill-opacity="0.6" stroke-width="2.5"/><path d="M1102.9 1655.0H1119.3" stroke="#fff" stroke-width="3"/></g><g stroke="#85ba48"><path d="M1173.6 1339.6V1562.8M1173.6 1707.9V1848.4" stroke-width="2.4"/><rect x="1164.2" y="1562.5" width="18.9" height="145.8" rx="3" fill="#85ba48" fill-opacity="0.6" stroke-width="2.5"/><path d="M1165.4 1659.9H1181.8" stroke="#fff" stroke-width="3"/></g><g stroke="#f36b9b"><path d="M1236.1 1408.3V1610.4M1236.1 1743.0V1848.4" stroke-width="2.4"/><rect x="1226.6" y="1610.1" width="18.9" height="133.3" rx="3" fill="#f36b9b" fill-opacity="0.6" stroke-width="2.5"/><path d="M1227.9 1669.0H1244.3" stroke="#fff" stroke-width="3"/></g><g stroke="#8470c9"><path d="M1298.6 731.7V1325.2M1298.6 1717.7V1859.5" stroke-width="2.4"/><rect x="1289.1" y="1324.9" width="18.9" height="393.2" rx="3" fill="#8470c9" fill-opacity="0.6" stroke-width="2.5"/><path d="M1290.4 1645.2H1306.8" stroke="#fff" stroke-width="3"/></g><g stroke="#e8534a"><path d="M1361.1 1443.3V1600.6M1361.1 1702.3V1845.6" stroke-width="2.4"/><rect x="1351.6" y="1600.2" width="18.9" height="102.4" rx="3" fill="#e8534a" fill-opacity="0.6" stroke-width="2.5"/><path d="M1352.9 1659.9H1369.3" stroke="#fff" stroke-width="3"/></g><g stroke="#c0cf38"><path d="M1423.6 1219.1V1504.6M1423.6 1692.5V1859.5" stroke-width="2.4"/><rect x="1414.1" y="1504.2" width="18.9" height="188.6" rx="3" fill="#c0cf38" fill-opacity="0.6" stroke-width="2.5"/><path d="M1415.4 1622.0H1431.8" stroke="#fff" stroke-width="3"/></g><g stroke="#b23ec5"><path d="M1486.1 1466.5V1604.1M1486.1 1693.2V1830.9" stroke-width="2.4"/><rect x="1476.6" y="1603.8" width="18.9" height="89.8" rx="3" fill="#b23ec5" fill-opacity="0.6" stroke-width="2.5"/><path d="M1477.9 1650.1H1494.3" stroke="#fff" stroke-width="3"/></g><g stroke="#ee9a22"><path d="M1548.6 1120.3V1434.5M1548.6 1642.8V1829.5" stroke-width="2.4"/><rect x="1539.1" y="1434.2" width="18.9" height="209.0" rx="3" fill="#ee9a22" fill-opacity="0.6" stroke-width="2.5"/><path d="M1540.4 1559.7H1556.8" stroke="#fff" stroke-width="3"/></g><g stroke="#eadf5b"><path d="M1611.0 1129.4V1465.4M1611.0 1686.9V1822.5" stroke-width="2.4"/><rect x="1601.6" y="1465.1" width="18.9" height="222.2" rx="3" fill="#eadf5b" fill-opacity="0.6" stroke-width="2.5"/><path d="M1602.8 1581.4H1619.2" stroke="#fff" stroke-width="3"/></g><g stroke="#ade4c9"><path d="M1673.5 1298.3V1532.0M1673.5 1686.2V1859.5" stroke-width="2.4"/><rect x="1664.1" y="1531.7" width="18.9" height="154.9" rx="3" fill="#ade4c9" fill-opacity="0.6" stroke-width="2.5"/><path d="M1665.3 1646.6H1681.7" stroke="#fff" stroke-width="3"/></g><g stroke="#27aeee"><path d="M1736.0 887.5V1315.4M1736.0 1597.9V1793.0" stroke-width="2.4"/><rect x="1726.6" y="1315.1" width="18.9" height="283.2" rx="3" fill="#27aeee" fill-opacity="0.6" stroke-width="2.5"/><path d="M1727.8 1487.5H1744.2" stroke="#fff" stroke-width="3"/></g><g stroke="#c0cf38"><path d="M1798.5 1397.1V1592.9M1798.5 1722.0V1843.5" stroke-width="2.4"/><rect x="1789.1" y="1592.6" width="18.9" height="129.8" rx="3" fill="#c0cf38" fill-opacity="0.6" stroke-width="2.5"/><path d="M1790.3 1674.6H1806.7" stroke="#fff" stroke-width="3"/></g><g stroke="#ade4c9"><path d="M1861.0 1363.5V1579.6M1861.0 1720.5V1856.0" stroke-width="2.4"/><rect x="1851.5" y="1579.2" width="18.9" height="141.6" rx="3" fill="#ade4c9" fill-opacity="0.6" stroke-width="2.5"/><path d="M1852.8 1651.5H1869.2" stroke="#fff" stroke-width="3"/></g><g stroke="#8470c9"><path d="M1923.5 1062.8V1453.5M1923.5 1711.4V1845.6" stroke-width="2.4"/><rect x="1914.0" y="1453.2" width="18.9" height="258.6" rx="3" fill="#8470c9" fill-opacity="0.6" stroke-width="2.5"/><path d="M1915.3 1610.8H1931.7" stroke="#fff" stroke-width="3"/></g><g stroke="#80d67e"><path d="M1986.0 263.9V1187.9M1986.0 1801.8V1859.5" stroke-width="2.4"/><rect x="1976.5" y="1187.6" width="18.9" height="614.6" rx="3" fill="#80d67e" fill-opacity="0.6" stroke-width="2.5"/><path d="M1977.8 1786.0H1994.2" stroke="#fff" stroke-width="3"/></g><g stroke="#8470c9"><path d="M2048.5 1320.0V1550.2M2048.5 1701.6V1854.0" stroke-width="2.4"/><rect x="2039.0" y="1549.9" width="18.9" height="152.1" rx="3" fill="#8470c9" fill-opacity="0.6" stroke-width="2.5"/><path d="M2040.3 1648.0H2056.7" stroke="#fff" stroke-width="3"/></g><g stroke="#8470c9"><path d="M2111.0 1335.4V1601.3M2111.0 1776.6V1848.4" stroke-width="2.4"/><rect x="2101.5" y="1601.0" width="18.9" height="176.0" rx="3" fill="#8470c9" fill-opacity="0.6" stroke-width="2.5"/><path d="M2102.8 1725.0H2119.2" stroke="#fff" stroke-width="3"/></g><g stroke="#b23ec5"><path d="M2173.4 1169.3V1474.5M2173.4 1675.7V1856.0" stroke-width="2.4"/><rect x="2164.0" y="1474.2" width="18.9" height="201.9" rx="3" fill="#b23ec5" fill-opacity="0.6" stroke-width="2.5"/><path d="M2165.2 1596.8H2181.6" stroke="#fff" stroke-width="3"/></g><g stroke="#ade4c9"><path d="M2235.9 1453.9V1624.4M2235.9 1734.6V1819.7" stroke-width="2.4"/><rect x="2226.5" y="1624.1" width="18.9" height="110.9" rx="3" fill="#ade4c9" fill-opacity="0.6" stroke-width="2.5"/><path d="M2227.7 1690.0H2244.1" stroke="#fff" stroke-width="3"/></g><g stroke="#ee9a22"><path d="M2298.4 1278.7V1564.2M2298.4 1751.4V1843.5" stroke-width="2.4"/><rect x="2289.0" y="1563.9" width="18.9" height="187.9" rx="3" fill="#ee9a22" fill-opacity="0.6" stroke-width="2.5"/><path d="M2290.2 1673.2H2306.6" stroke="#fff" stroke-width="3"/></g><g stroke="#e8534a"><path d="M2360.9 1352.2V1581.7M2360.9 1732.5V1840.0" stroke-width="2.4"/><rect x="2351.5" y="1581.4" width="18.9" height="151.5" rx="3" fill="#e8534a" fill-opacity="0.6" stroke-width="2.5"/><path d="M2352.7 1678.8H2369.1" stroke="#fff" stroke-width="3"/></g><g stroke="#c0cf38"><path d="M2423.4 1483.3V1645.5M2423.4 1750.7V1835.0" stroke-width="2.4"/><rect x="2414.0" y="1645.2" width="18.9" height="105.9" rx="3" fill="#c0cf38" fill-opacity="0.6" stroke-width="2.5"/><path d="M2415.2 1681.6H2431.6" stroke="#fff" stroke-width="3"/></g><g stroke="#8470c9"><path d="M2485.9 1412.5V1614.6M2485.9 1747.2V1843.5" stroke-width="2.4"/><rect x="2476.5" y="1614.2" width="18.9" height="133.3" rx="3" fill="#8470c9" fill-opacity="0.6" stroke-width="2.5"/><path d="M2477.7 1672.5H2494.1" stroke="#fff" stroke-width="3"/></g><g stroke="#27aeee"><path d="M2548.4 1349.4V1569.8M2548.4 1714.2V1805.6" stroke-width="2.4"/><rect x="2538.9" y="1569.5" width="18.9" height="145.1" rx="3" fill="#27aeee" fill-opacity="0.6" stroke-width="2.5"/><path d="M2540.2 1640.3H2556.6" stroke="#fff" stroke-width="3"/></g><g stroke="#c0cf38"><path d="M2610.9 783.4V1365.9M2610.9 1752.1V1851.2" stroke-width="2.4"/><rect x="2601.4" y="1365.6" width="18.9" height="386.9" rx="3" fill="#c0cf38" fill-opacity="0.6" stroke-width="2.5"/><path d="M2602.7 1664.1H2619.1" stroke="#fff" stroke-width="3"/></g><g stroke="#b23ec5"><path d="M2673.4 1484.7V1639.2M2673.4 1740.2V1814.0" stroke-width="2.4"/><rect x="2663.9" y="1638.9" width="18.9" height="101.7" rx="3" fill="#b23ec5" fill-opacity="0.6" stroke-width="2.5"/><path d="M2665.2 1691.4H2681.6" stroke="#fff" stroke-width="3"/></g><g stroke="#80d67e"><path d="M2735.9 1369.1V1561.4M2735.9 1687.6V1845.6" stroke-width="2.4"/><rect x="2726.4" y="1561.1" width="18.9" height="126.9" rx="3" fill="#80d67e" fill-opacity="0.6" stroke-width="2.5"/><path d="M2727.7 1651.5H2744.1" stroke="#fff" stroke-width="3"/></g><g stroke="#ee9a22"><path d="M2798.4 1280.1V1521.4M2798.4 1680.6V1827.4" stroke-width="2.4"/><rect x="2788.9" y="1521.1" width="18.9" height="159.9" rx="3" fill="#ee9a22" fill-opacity="0.6" stroke-width="2.5"/><path d="M2790.2 1605.2H2806.6" stroke="#fff" stroke-width="3"/></g><g stroke="#85ba48"><path d="M2860.8 1438.4V1620.9M2860.8 1740.9V1854.0" stroke-width="2.4"/><rect x="2851.4" y="1620.6" width="18.9" height="120.7" rx="3" fill="#85ba48" fill-opacity="0.6" stroke-width="2.5"/><path d="M2852.6 1676.0H2869.0" stroke="#fff" stroke-width="3"/></g><g stroke="#ade4c9"><path d="M2923.3 1455.3V1627.2M2923.3 1740.2V1856.0" stroke-width="2.4"/><rect x="2913.9" y="1626.9" width="18.9" height="113.7" rx="3" fill="#ade4c9" fill-opacity="0.6" stroke-width="2.5"/><path d="M2915.1 1718.7H2931.5" stroke="#fff" stroke-width="3"/></g><g stroke="#e8534a"><path d="M2985.8 1075.4V1315.4M2985.8 1473.2V1713.1" stroke-width="2.4"/><rect x="2976.4" y="1315.1" width="18.9" height="158.5" rx="3" fill="#e8534a" fill-opacity="0.6" stroke-width="2.5"/><path d="M2977.6 1350.8H2994.0" stroke="#fff" stroke-width="3"/></g><g stroke="#85ba48"><path d="M3048.3 1642.4V1690.3M3048.3 1720.5V1769.2" stroke-width="2.4"/><rect x="3038.9" y="1690.0" width="18.9" height="30.9" rx="3" fill="#85ba48" fill-opacity="0.6" stroke-width="2.5"/><path d="M3040.1 1711.7H3056.5" stroke="#fff" stroke-width="3"/></g><g stroke="#b23ec5"><path d="M3110.8 1306.7V1559.3M3110.8 1724.7V1822.5" stroke-width="2.4"/><rect x="3101.4" y="1559.0" width="18.9" height="166.1" rx="3" fill="#b23ec5" fill-opacity="0.6" stroke-width="2.5"/><path d="M3102.6 1626.2H3119.0" stroke="#fff" stroke-width="3"/></g><g stroke="#f36b9b"><path d="M3173.3 1454.6V1602.0M3173.3 1697.4V1845.6" stroke-width="2.4"/><rect x="3163.8" y="1601.7" width="18.9" height="96.1" rx="3" fill="#f36b9b" fill-opacity="0.6" stroke-width="2.5"/><path d="M3165.1 1666.9H3181.5" stroke="#fff" stroke-width="3"/></g><g stroke="#eadf5b"><path d="M3235.8 1374.9V1574.2M3235.8 1705.7V1777.4" stroke-width="2.4"/><rect x="3226.3" y="1573.9" width="18.9" height="132.2" rx="3" fill="#eadf5b" fill-opacity="0.6" stroke-width="2.5"/><path d="M3227.6 1660.5H3244.0" stroke="#fff" stroke-width="3"/></g><g stroke="#80d67e"><path d="M3298.3 1418.8V1576.5M3298.3 1680.1V1753.7" stroke-width="2.4"/><rect x="3288.8" y="1576.2" width="18.9" height="104.3" rx="3" fill="#80d67e" fill-opacity="0.6" stroke-width="2.5"/><path d="M3290.1 1637.0H3306.5" stroke="#fff" stroke-width="3"/></g><g stroke="#8470c9"><path d="M3360.8 1665.5V1666.5M3360.8 1742.8V1743.8" stroke-width="2.4"/><rect x="3351.3" y="1666.2" width="18.9" height="77.0" rx="3" fill="#8470c9" fill-opacity="0.6" stroke-width="2.5"/><path d="M3352.6 1683.5H3369.0" stroke="#fff" stroke-width="3"/></g></g>
<path d="M611.2 1859.5V1866 M673.7 1859.5V1866 M736.2 1859.5V1866 M798.7 1859.5V1866 M861.2 1859.5V1866 M923.7 1859.5V1866 M986.1 1859.5V1866 M1048.6 1859.5V1866 M1111.1 1859.5V1866 M1173.6 1859.5V1866 M1236.1 1859.5V1866 M1298.6 1859.5V1866 M1361.1 1859.5V1866 M1423.6 1859.5V1866 M1486.1 1859.5V1866 M1548.6 1859.5V1866 M1611.0 1859.5V1866 M1673.5 1859.5V1866 M1736.0 1859.5V1866 M1798.5 1859.5V1866 M1861.0 1859.5V1866 M1923.5 1859.5V1866 M1986.0 1859.5V1866 M2048.5 1859.5V1866 M2111.0 1859.5V1866 M2173.4 1859.5V1866 M2235.9 1859.5V1866 M2298.4 1859.5V1866 M2360.9 1859.5V1866 M2423.4 1859.5V1866 M2485.9 1859.5V1866 M2548.4 1859.5V1866 M2610.9 1859.5V1866 M2673.4 1859.5V1866 M2735.9 1859.5V1866 M2798.4 1859.5V1866 M2860.8 1859.5V1866 M2923.3 1859.5V1866 M2985.8 1859.5V1866 M3048.3 1859.5V1866 M3110.8 1859.5V1866 M3173.3 1859.5V1866 M3235.8 1859.5V1866 M3298.3 1859.5V1866" stroke="#a8a8a8" stroke-width="2" fill="none"/>
<g font-family="Liberation Sans" font-size="12.6" fill="#b0b0b0" text-anchor="end"><text transform="translate(618.2,1874.8) rotate(-45)">CA</text><text transform="translate(680.7,1874.8) rotate(-45)">TX</text><text transform="translate(743.2,1874.8) rotate(-45)">FL</text><text transform="translate(805.7,1874.8) rotate(-45)">IL</text><text transform="translate(868.2,1874.8) rotate(-45)">GA</text><text transform="translate(930.7,1874.8) rotate(-45)">NY</text><text transform="translate(993.1,1874.8) rotate(-45)">CO</text><text transform="translate(1055.6,1874.8) rotate(-45)">AZ</text><text transform="translate(1118.1,1874.8) rotate(-45)">NC</text><text transform="translate(1180.6,1874.8) rotate(-45)">VA</text><text transform="translate(1243.1,1874.8) rotate(-45)">MI</text><text transform="translate(1305.6,1874.8) rotate(-45)">NV</text><text transform="translate(1368.1,1874.8) rotate(-45)">TN</text><text transform="translate(1430.6,1874.8) rotate(-45)">PA</text><text transform="translate(1493.1,1874.8) rotate(-45)">UT</text><text transform="translate(1555.6,1874.8) rotate(-45)">NJ</text><text transform="translate(1618.0,1874.8) rotate(-45)">MN</text><text transform="translate(1680.5,1874.8) rotate(-45)">MO</text><text transform="translate(1743.0,1874.8) rotate(-45)">WA</text><text transform="translate(1805.5,1874.8) rotate(-45)">OH</text><text transform="translate(1868.0,1874.8) rotate(-45)">KY</text><text transform="translate(1930.5,1874.8) rotate(-45)">MA</text><text transform="translate(1993.0,1874.8) rotate(-45)">HI</text><text transform="translate(2055.5,1874.8) rotate(-45)">MD</text><text transform="translate(2118.0,1874.8) rotate(-45)">WI</text><text transform="translate(2180.4,1874.8) rotate(-45)">OR</text><text transform="translate(2242.9,1874.8) rotate(-45)">LA</text><text transform="translate(2305.4,1874.8) rotate(-45)">IN</text><text transform="translate(2367.9,1874.8) rotate(-45)">OK</text><text transform="translate(2430.4,1874.8) rotate(-45)">AL</text><text transform="translate(2492.9,1874.8) rotate(-45)">SC</text><text transform="translate(2555.4,1874.8) rotate(-45)">NM</text><text transform="translate(2617.9,1874.8) rotate(-45)">AK</text><text transform="translate(2680.4,1874.8) rotate(-45)">AR</text><text transform="translate(2742.9,1874.8) rotate(-45)">NE</text><text transform="translate(2805.4,1874.8) rotate(-45)">CT</text><text transform="translate(2867.8,1874.8) rotate(-45)">IA</text><text transform="translate(2930.3,1874.8) rotate(-45)">ID</text><text transform="translate(2992.8,1874.8) rotate(-45)">PR</text><text transform="translate(3055.3,1874.8) rotate(-45)">MS</text><text transform="translate(3117.8,1874.8) rotate(-45)">RI</text><text transform="translate(3180.3,1874.8) rotate(-45)">MT</text><text transform="translate(3242.8,1874.8) rotate(-45)">NH</text><text transform="translate(3305.3,1874.8) rotate(-45)">KS</text></g>
<text x="1969.5" y="1908" font-family="Liberation Sans" font-size="16" fill="#b4b4b4" text-anchor="middle">dest_state</text>
<text transform="translate(544.2,1001.3) rotate(-90)" font-family="Liberation Sans" font-size="16" fill="#b4b4b4" text-anchor="middle">airtime</text>
<g font-family="Liberation Sans" font-weight="bold" font-size="45" fill="#f8c84e" stroke="#f8c84e" stroke-width="2.5" letter-spacing="2.35"><text x="2062" y="1003">Hawaii: Longest</text><text x="2062" y="1064.5">Flight Times</text></g>
<path d="M2172.7 1083.1L2030 1258" stroke="#f5290b" stroke-width="4"/>
<path d="M2018.1 1271.3L2023.5 1246.5L2041.8 1261.2Z" fill="#f5290b"/>
</svg><div class="a" style="left:3389px;top:69px;width:1px;height:1862px;background:#000000;"></div>
<div class="a" style="left:3390px;top:69px;width:390px;height:1862px;background:#262626;"></div>
<div class="a" style="left:3780px;top:69px;width:8px;height:1862px;background:#1c1c1c;"></div>
<div class="a" style="left:3390px;top:69px;width:390px;height:42px;background:#272727;"></div>
<div class="t" style="left:3085px;width:1000px;text-align:center;top:81.66px;font-size:14.7px;color:#a8a8a8;">Legend and Settings</div>
<div class="a" style="left:3390px;top:111px;width:390px;height:134.5px;background:#1e1e1e;"></div>
<div class="a" style="left:3400px;top:126px;width:370px;height:40px;border:1px solid #4a4a4a;border-radius:5px"></div>
<div class="a" style="left:3400px;top:126px;width:174px;height:40px;background:#0088d4;border-radius:5px 0 0 5px"></div>
<div class="t" style="left:3476.8px;top:137.16px;font-size:15.4px;color:#ffffff;">Vertical</div>
<div class="t" style="left:3653.8px;top:137.50px;font-size:15px;color:#a8a8a8;">Horizontal</div>
<svg class="a" style="left:3446px;top:131px" width="22" height="24" viewBox="0 0 22 24">
<path d="M3 23V15M7.5 23V17M12 23V14M16.5 23V11" stroke="#fff" stroke-width="2.6"/>
<path d="M2.5 10L7 6L11.5 9L16.5 3" stroke="#fff" stroke-width="1" fill="none"/>
<circle cx="2.5" cy="10" r="1.3" fill="none" stroke="#fff" stroke-width="0.8"/><circle cx="7" cy="6" r="1.3" fill="none" stroke="#fff" stroke-width="0.8"/>
<circle cx="11.5" cy="9" r="1.3" fill="none" stroke="#fff" stroke-width="0.8"/><circle cx="16.5" cy="3" r="1.3" fill="none" stroke="#fff" stroke-width="0.8"/>
</svg>
<svg class="a" style="left:3620px;top:130px" width="24" height="24" viewBox="3620 130 24 24">
<path d="M3622.6 134.8H3630M3622.6 140.1H3632M3622.6 145.3H3629M3622.6 149.5H3636" stroke="#9a9a9a" stroke-width="2.8"/>
<path d="M3634.2 134L3638.7 140.8L3635.7 144.6L3640.7 149.8" stroke="#9a9a9a" stroke-width="0.9" fill="none"/>
<circle cx="3634.2" cy="134" r="1.2" fill="#1e1e1e" stroke="#9a9a9a" stroke-width="0.8"/><circle cx="3638.7" cy="140.8" r="1.2" fill="#1e1e1e" stroke="#9a9a9a" stroke-width="0.8"/>
<circle cx="3635.7" cy="144.6" r="1.2" fill="#1e1e1e" stroke="#9a9a9a" stroke-width="0.8"/><circle cx="3640.7" cy="149.8" r="1.2" fill="#1e1e1e" stroke="#9a9a9a" stroke-width="0.8"/>
</svg>
<div class="t" style="left:3400px;top:177.99px;font-size:17.5px;color:#ececec;">Show outliers</div>
<div class="a" style="left:3727px;top:180px;width:42px;height:16px;background:#707070;border-radius:8px"></div>
<div class="a" style="left:3726px;top:177.5px;width:21px;height:21px;background:#e8e8e8;border-radius:50%;box-shadow:0 1px 3px rgba(0,0,0,.6)"></div>
<div class="t" style="left:3400px;top:212.86px;font-size:17.3px;color:#ececec;">Show grid lines</div>
<div class="a" style="left:3730px;top:215px;width:40px;height:16px;background:#0b5f90;border-radius:8px"></div>
<div class="a" style="left:3750.5px;top:211.5px;width:24px;height:24px;background:#0a8fd6;border-radius:50%;box-shadow:0 1px 3px rgba(0,0,0,.6)"></div>
<div class="t" style="left:3400px;top:267.89px;font-size:17.5px;color:#ececec;">Graphical settings</div>
<div class="t" style="left:3561px;top:267.89px;font-size:17.5px;color:#a0a0a0;">Data and formatting</div>
<div class="a" style="left:3390px;top:293px;width:390px;height:1px;background:#3a3a3a;"></div>
<div class="a" style="left:3390px;top:291px;width:160px;height:2.5px;background:#b8b8b8;"></div>
<svg class="a" style="left:3404px;top:314px" width="17" height="25" viewBox="0 0 17 25">
<path d="M1.5 1.5H15.5M1.5 23.5H15.5M8.5 1.5V6M8.5 19V23.5" stroke="#0a8fd6" stroke-width="2"/>
<rect x="3.5" y="6" width="10" height="13" fill="none" stroke="#0a8fd6" stroke-width="2"/>
<path d="M3.5 12.5H13.5" stroke="#0a8fd6" stroke-width="2"/>
</svg>
<div class="t" style="left:3435.3px;top:316.16px;font-size:18px;color:#ececec;">airtime</div>
<svg class="a" style="left:3749px;top:324px" width="20" height="12" viewBox="0 0 20 12"><path d="M2 2L10 10L18 2" stroke="#a8a8a8" stroke-width="2" fill="none"/></svg>
<div class="a" style="left:3390px;top:356px;width:390px;height:1px;background:#3a3a3a;"></div>
<div class="a" style="left:3420px;top:377px;width:330px;height:40px;border:1px solid #4a4a4a;border-radius:5px"></div>
<div class="a" style="left:3420px;top:377px;width:158px;height:40px;background:#0088d4;border-radius:5px 0 0 5px"></div>
<svg class="a" style="left:3458px;top:384px" width="15" height="24" viewBox="0 0 15 24">
<path d="M0.5 1H14.5M0.5 23H14.5M7.5 1V5M7.5 19V23" stroke="#fff" stroke-width="1.8"/>
<rect x="2.5" y="5" width="10" height="14" fill="none" stroke="#fff" stroke-width="1.8"/>
<path d="M2.5 11.5H12.5" stroke="#fff" stroke-width="1.8"/>
</svg>
<div class="t" style="left:3488.8px;top:387.89px;font-size:14.9px;color:#ffffff;">Box Plot</div>
<svg class="a" style="left:3610px;top:380px" width="30" height="30" viewBox="3610 380 30 30">
<path d="M3625.4 382.3L3627.8 385L3625.9 387.2V389.2Q3627 391.6 3632.6 393Q3627 394.6 3625.9 396.6Q3627.5 399.8 3636.2 401.2Q3628.2 403.6 3625.4 408.4Q3622.6 403.6 3614.6 401.2Q3623.3 399.8 3624.9 396.6Q3623.8 394.6 3618.2 393Q3623.8 391.6 3624.9 389.2V387.2L3623 385Z" fill="#959595"/>
</svg>
<div class="t" style="left:3647.6px;top:387.52px;font-size:15.1px;color:#a8a8a8;">Violin Plot</div>
<div class="t" style="left:3420px;top:452.98px;font-size:14.2px;color:#9a9a9a;font-weight:bold;">Color Mapping</div>
<div class="a" style="left:3593px;top:445px;width:42px;height:32px;border:1px solid #4a4a4a;border-radius:5px"></div>
<svg class="a" style="left:3605px;top:452px" width="18" height="18" viewBox="0 0 18 18"><path d="M9 1V17M1 9H17" stroke="#eee" stroke-width="2.2"/></svg>
<div class="a" style="left:3640px;top:445px;width:110px;height:32px;border:1px solid #4a4a4a;border-radius:5px"></div>
<svg class="a" style="left:3648px;top:450px" width="22" height="22" viewBox="3648 450 22 22">
<path d="M3656.2 456.5V454.6Q3656.2 453.2 3657.6 453.2H3665.2Q3666.6 453.2 3666.6 454.6V462.2Q3666.6 463.6 3665.2 463.6H3662.8" fill="none" stroke="#eee" stroke-width="1.5"/>
<path d="M3662 465.2V467Q3662 468.4 3660.6 468.4H3652.8Q3651.4 468.4 3651.4 467V459.4Q3651.4 458 3652.8 458H3655" fill="none" stroke="#eee" stroke-width="1.5"/>
<path d="M3655.4 458.2H3663.4M3661.2 456L3663.4 458.2L3661.2 460.4M3662.6 463.4H3654.6M3656.8 461.2L3654.6 463.4L3656.8 465.6" fill="none" stroke="#eee" stroke-width="1.4"/>
</svg>
<div class="t" style="left:3679px;top:453.36px;font-size:16.7px;color:#f0f0f0;font-weight:bold;">Manage</div>
<div class="a" style="left:3420px;top:504px;width:30px;height:33px;background:#e8534a;"></div>
<div class="a" style="left:3450px;top:504px;width:30px;height:33px;background:#c0cf38;"></div>
<div class="a" style="left:3480px;top:504px;width:30px;height:33px;background:#b23ec5;"></div>
<div class="a" style="left:3510px;top:504px;width:30px;height:33px;background:#ee9a22;"></div>
<div class="a" style="left:3540px;top:504px;width:30px;height:33px;background:#85ba48;"></div>
<div class="a" style="left:3570px;top:504px;width:30px;height:33px;background:#f36b9b;"></div>
<div class="a" style="left:3600px;top:504px;width:30px;height:33px;background:#ade4c9;"></div>
<div class="a" style="left:3630px;top:504px;width:30px;height:33px;background:#eadf5b;"></div>
<div class="a" style="left:3660px;top:504px;width:30px;height:33px;background:#8470c9;"></div>
<div class="a" style="left:3690px;top:504px;width:30px;height:33px;background:#80d67e;"></div>
<div class="a" style="left:3720px;top:504px;width:30px;height:33px;background:#27aeee;"></div>
<div class="t" style="left:3420px;top:555.69px;font-size:17.5px;color:#ececec;">dest_state</div>
<div class="a" style="left:3420px;top:578.5px;width:330px;height:1.5px;background:#9a9a9a;"></div>
<div class="a" style="left:3420px;top:590px;width:330px;height:39px;background:#3a3a3a;border-radius:5px 5px 0 0"></div>
<svg class="a" style="left:3428px;top:598px" width="24" height="24" viewBox="0 0 24 24"><circle cx="9.5" cy="9.5" r="7" fill="none" stroke="#a0a0a0" stroke-width="2"/><path d="M14.5 14.5L21 21" stroke="#a0a0a0" stroke-width="2.2"/></svg>
<div class="t" style="left:3464.8px;top:601.64px;font-size:14.6px;color:#9c9c9c;">Search</div>
<div class="a" style="left:3425px;top:645.6px;width:20px;height:20.4px;background:#80d67e;border-radius:2px"></div>
<div class="t" style="left:3450px;top:648.78px;font-size:14.2px;color:#e0e0e0;">CA</div>
<div class="a" style="left:3425px;top:677.0px;width:20px;height:20.4px;background:#80d67e;border-radius:2px"></div>
<div class="t" style="left:3450px;top:680.18px;font-size:14.2px;color:#e0e0e0;">TX</div>
<div class="a" style="left:3425px;top:708.4px;width:20px;height:20.4px;background:#80d67e;border-radius:2px"></div>
<div class="t" style="left:3450px;top:711.58px;font-size:14.2px;color:#e0e0e0;">FL</div>
<div class="a" style="left:3425px;top:739.8px;width:20px;height:20.4px;background:#b23ec5;border-radius:2px"></div>
<div class="t" style="left:3450px;top:742.98px;font-size:14.2px;color:#e0e0e0;">IL</div>
<div class="a" style="left:3425px;top:771.2px;width:20px;height:20.4px;background:#8470c9;border-radius:2px"></div>
<div class="t" style="left:3450px;top:774.38px;font-size:14.2px;color:#e0e0e0;">GA</div>
<div class="a" style="left:3425px;top:802.6px;width:20px;height:20.4px;background:#b23ec5;border-radius:2px"></div>
<div class="t" style="left:3450px;top:805.78px;font-size:14.2px;color:#e0e0e0;">NY</div>
<div class="a" style="left:3425px;top:834.0px;width:20px;height:20.4px;background:#c0cf38;border-radius:2px"></div>
<div class="t" style="left:3450px;top:837.18px;font-size:14.2px;color:#e0e0e0;">CO</div>
<div class="a" style="left:3425px;top:865.4px;width:20px;height:20.4px;background:#f36b9b;border-radius:2px"></div>
<div class="t" style="left:3450px;top:868.58px;font-size:14.2px;color:#e0e0e0;">AZ</div>
<div class="a" style="left:3425px;top:896.8px;width:20px;height:20.4px;background:#85ba48;border-radius:2px"></div>
<div class="t" style="left:3450px;top:899.98px;font-size:14.2px;color:#e0e0e0;">NC</div>
<div class="a" style="left:3425px;top:928.2px;width:20px;height:20.4px;background:#85ba48;border-radius:2px"></div>
<div class="t" style="left:3450px;top:931.38px;font-size:14.2px;color:#e0e0e0;">VA</div>
<div class="a" style="left:3425px;top:959.6px;width:20px;height:20.4px;background:#f36b9b;border-radius:2px"></div>
<div class="t" style="left:3450px;top:962.78px;font-size:14.2px;color:#e0e0e0;">MI</div>
<div class="a" style="left:3425px;top:991.0px;width:20px;height:20.4px;background:#8470c9;border-radius:2px"></div>
<div class="t" style="left:3450px;top:994.18px;font-size:14.2px;color:#e0e0e0;">NV</div>
<div class="a" style="left:3425px;top:1022.4px;width:20px;height:20.4px;background:#e8534a;border-radius:2px"></div>
<div class="t" style="left:3450px;top:1025.58px;font-size:14.2px;color:#e0e0e0;">TN</div>
<div class="a" style="left:3425px;top:1053.8px;width:20px;height:20.4px;background:#c0cf38;border-radius:2px"></div>
<div class="t" style="left:3450px;top:1056.98px;font-size:14.2px;color:#e0e0e0;">PA</div>
<div class="a" style="left:3740px;top:640px;width:10px;height:437px;background:#1e1e1e;border-radius:5px"></div>
<div class="a" style="left:3740px;top:640px;width:10px;height:120px;background:#3a3a3a;border-radius:5px"></div>
</body></html>
